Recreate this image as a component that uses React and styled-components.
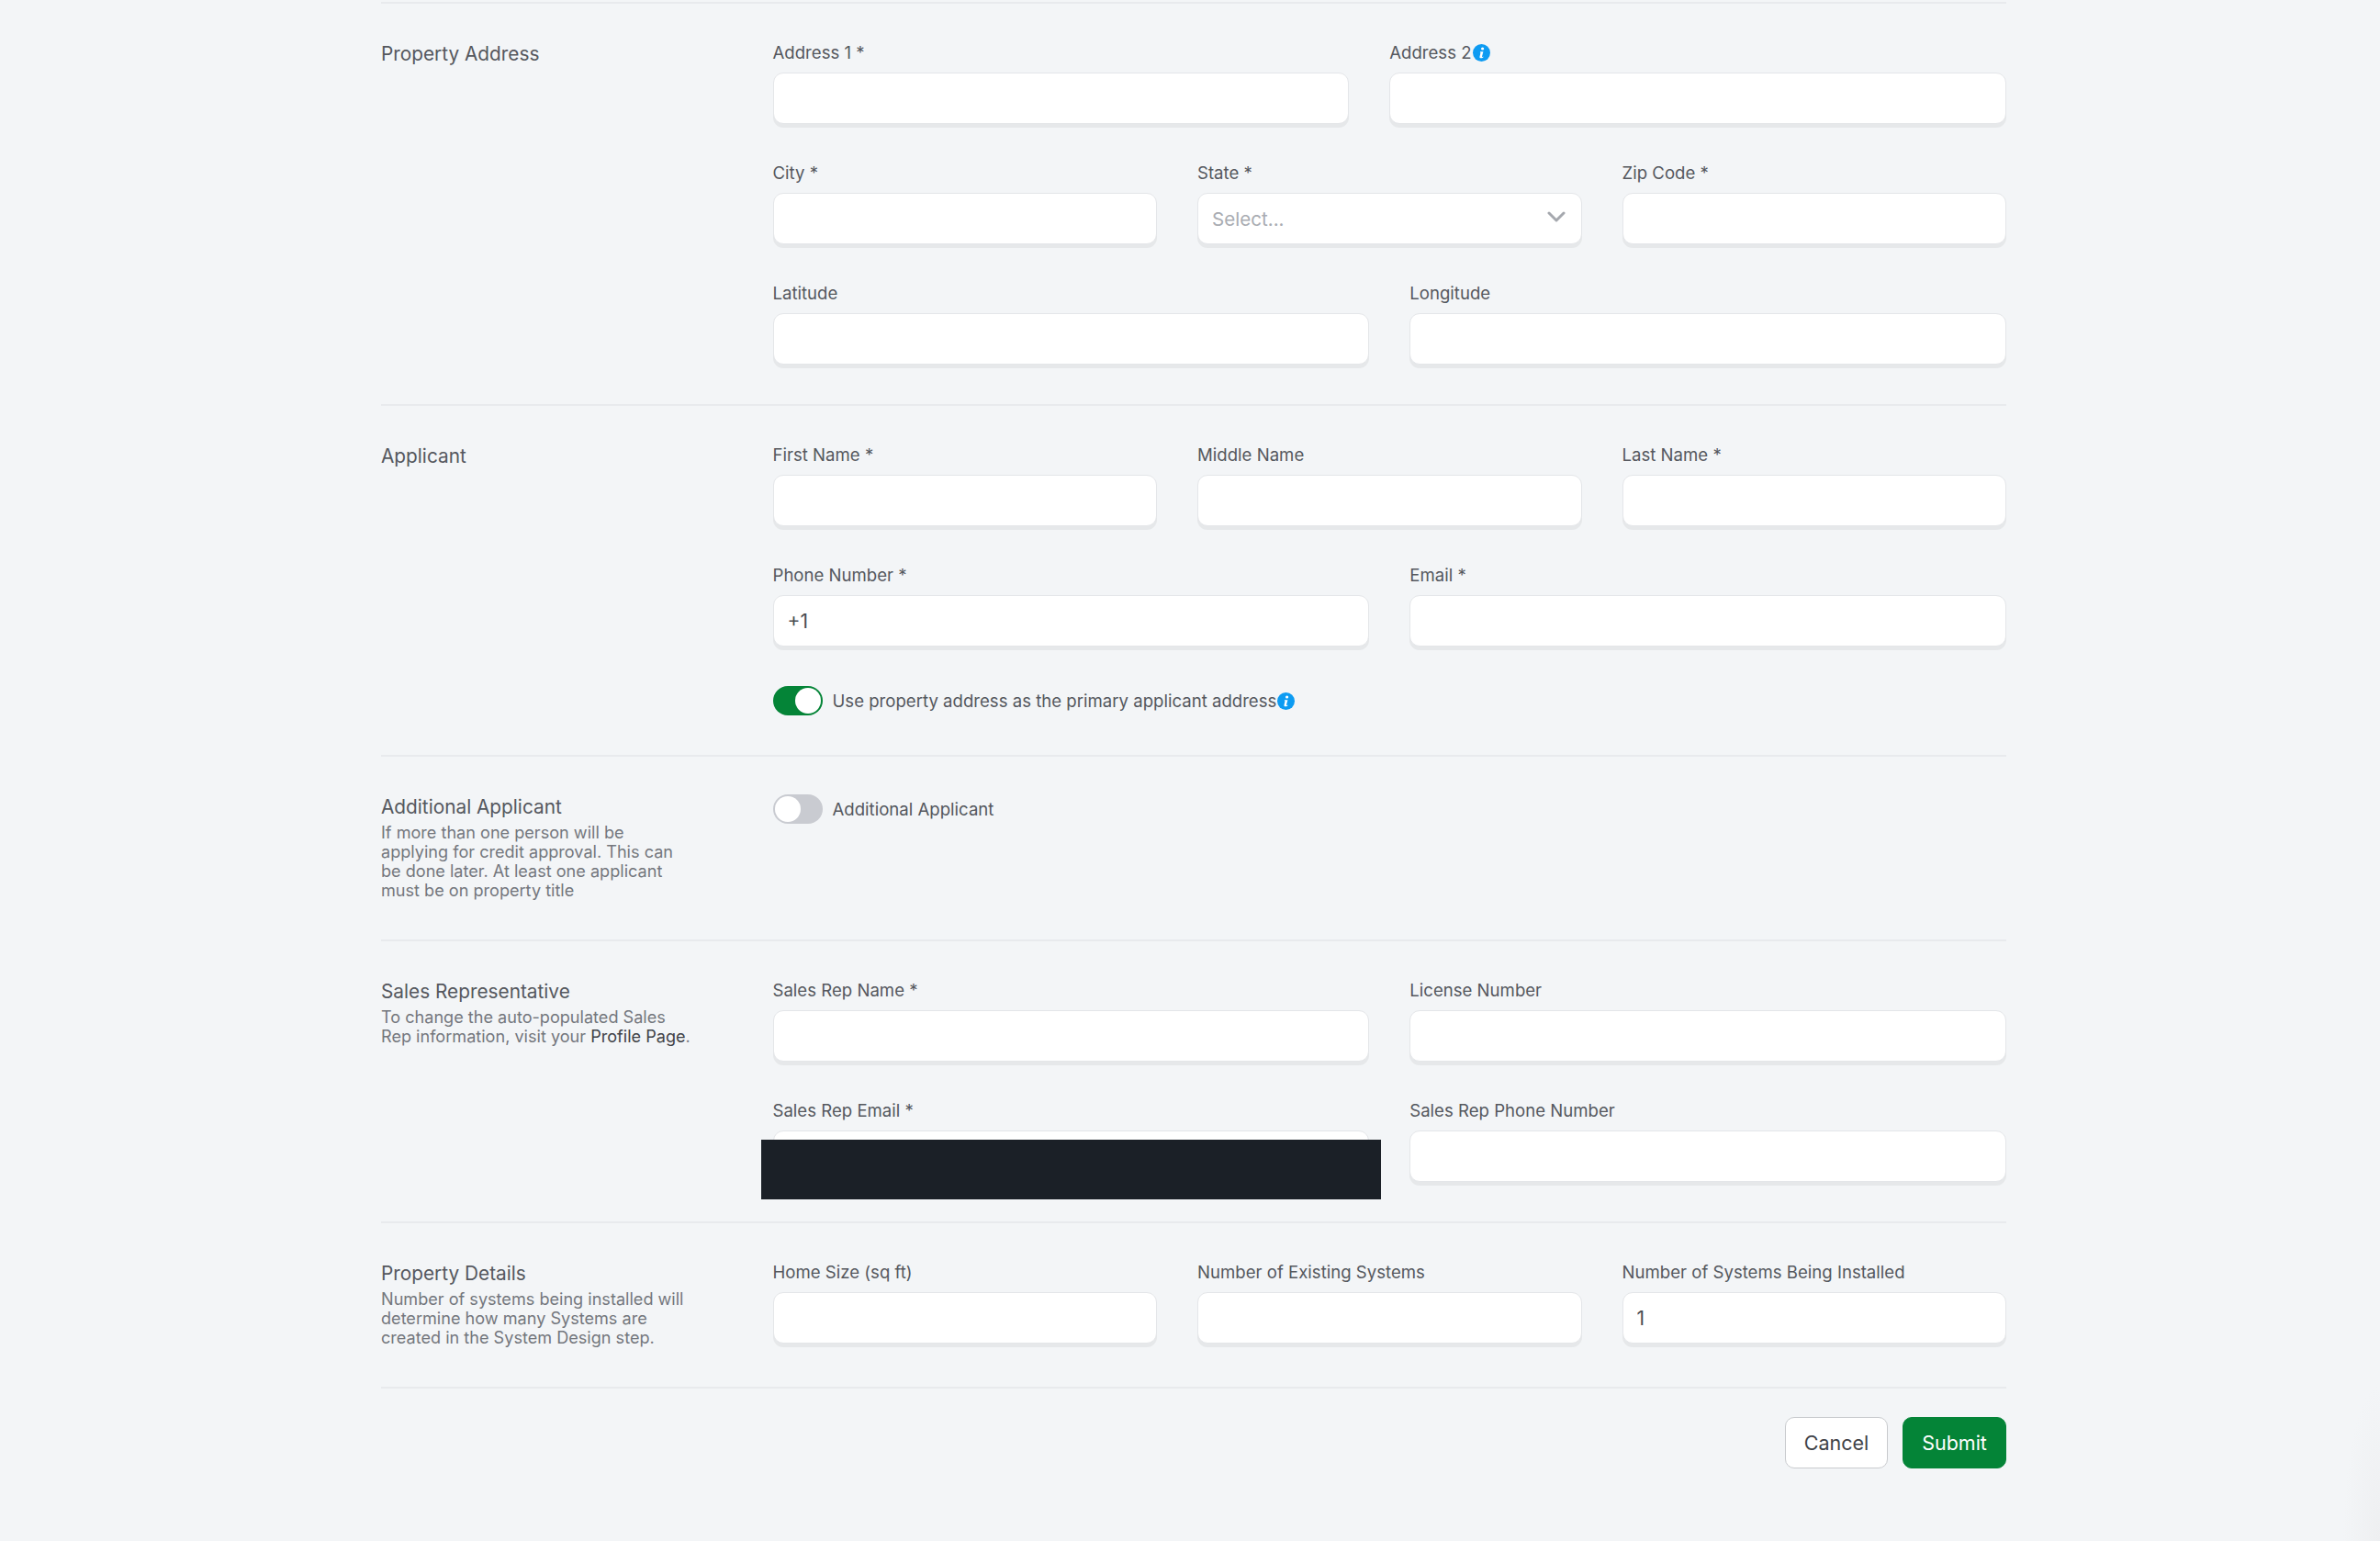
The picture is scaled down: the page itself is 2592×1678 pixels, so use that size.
import React from "react"
import styled, { createGlobalStyle } from "styled-components"

const GlobalStyle = createGlobalStyle`
  html, body {
    margin: 0;
    padding: 0;
    background: #f3f5f7;
  }
  body {
    background: radial-gradient(ellipse 40px 170px at 100% 100%, #eeeff1, transparent) no-repeat, #f3f5f7;
  }
  * {
    box-sizing: border-box;
  }
`

const Page = styled.div`
  width: 1770px;
  min-height: 1678px;
  margin-left: 415px;
  padding-top: 2px;
  font-family: Inter, "Noto Sans", sans-serif;
`

const Section = styled.section`
  display: grid;
  grid-template-columns: 426.5px 1fr;
  padding: 41px 0 43px;
  border-top: 2px solid #e8eaed;
`

const SectionInfo = styled.div`
  min-width: 0;
  margin-top: -1px;
`

const SectionTitle = styled.h3`
  margin: 0 0 2px;
  font-size: 20.8px;
  line-height: 30px;
  font-weight: 400;
  color: #55585e;
`

const SectionText = styled.p`
  margin: 0;
  max-width: 339px;
  font-size: 18.1px;
  line-height: 21px;
  color: #74777d;
`

const PlainLink = styled.a`
  color: #3f4247;
`

const Fields = styled.div`
  display: flex;
  flex-direction: column;
  gap: 41px;
  min-width: 0;
`

const Row = styled.div`
  display: grid;
  grid-template-columns: ${props => props.$cols};
  gap: 44px;
`

const Field = styled.div`
  position: relative;
  min-width: 0;
`

const Label = styled.label`
  display: flex;
  align-items: center;
  gap: 1px;
  height: 24px;
  margin-bottom: 10px;
  font-size: 18.6px;
  line-height: 22px;
  color: #55585e;
`

const Input = styled.input`
  display: block;
  width: 100%;
  height: 56px;
  padding: 0 15px;
  border: 1px solid #e4e6e9;
  border-radius: 11px;
  background: #fff;
  box-shadow: 0 4px 0 #e6e8ea;
  font-family: inherit;
  font-size: 21px;
  color: #4a4d52;
  outline: none;
`

const SelectBox = styled.div`
  display: flex;
  align-items: center;
  justify-content: space-between;
  height: 56px;
  padding: 0 15px;
  border: 1px solid #e4e6e9;
  border-radius: 11px;
  background: #fff;
  box-shadow: 0 4px 0 #e6e8ea;
  font-size: 20.6px;
  color: #a9acb2;
`

const Chevron = styled.svg`
  width: 20px;
  height: 12px;
  margin: -4px 2px 0 0;
  fill: none;
  stroke: #a5a8ae;
  stroke-width: 3;
  stroke-linecap: round;
  stroke-linejoin: round;
`

const InfoIcon = styled.svg`
  flex: none;
  width: 19px;
  height: 19px;
`

const Redaction = styled.div`
  position: absolute;
  top: 44px;
  left: -13px;
  right: -13px;
  height: 65px;
  background: #1b2027;
`

const ToggleRow = styled.div`
  display: flex;
  align-items: center;
  gap: 11px;
  height: 32px;
  margin-top: ${props => (props.$spaced ? "2px" : "0")};
  font-size: 18.6px;
  color: #55585e;
`

const ToggleText = styled.span`
  display: flex;
  align-items: center;
  gap: 1px;
`

const Toggle = styled.span`
  flex: none;
  display: flex;
  justify-content: ${props => (props.$on ? "flex-end" : "flex-start")};
  width: 54px;
  height: 32px;
  padding: 2px;
  border-radius: 16px;
  background: ${props => (props.$on ? "#048437" : "#c9cbd1")};

  &::after {
    content: "";
    width: 28px;
    height: 28px;
    border-radius: 50%;
    background: #fff;
  }
`

const Actions = styled.div`
  display: flex;
  justify-content: flex-end;
  gap: 16px;
  padding-top: 31px;
  border-top: 2px solid #e8eaed;
`

const Button = styled.button`
  height: 56px;
  padding: 0;
  width: ${props => (props.$primary ? "113px" : "112px")};
  border: 1px solid ${props => (props.$primary ? "#048437" : "#c9cbce")};
  border-radius: 10px;
  background: ${props => (props.$primary ? "#048437" : "#fff")};
  color: ${props => (props.$primary ? "#fff" : "#3f4247")};
  font-family: inherit;
  font-size: 21.5px;
  font-weight: 400;
`

const Info = () => (
  <InfoIcon viewBox="0 0 19 19">
    <circle cx="9.5" cy="9.5" r="9.5" fill="#0d9bf2" />
    <circle cx="10.6" cy="5" r="1.6" fill="#fff" />
    <path d="M8 8.2h3.4L10 13.6c-.1.4.2.5.5.4l1-.5-.2.9c-.9.7-1.7.9-2.5.9-1 0-1.5-.7-1.3-1.6l1-4.4-.6-.1z" fill="#fff" />
  </InfoIcon>
)

const FieldBox = ({ label, info, value, redacted }) => (
  <Field>
    <Label>
      {label}
      {info && <Info />}
    </Label>
    <Input defaultValue={value} />
    {redacted && <Redaction />}
  </Field>
)

const TWO = "1fr 1fr"
const THREE = "1fr 1fr 1fr"

const App = () => (
  <Page>
    <GlobalStyle />

    <Section>
      <SectionInfo>
        <SectionTitle>Property Address</SectionTitle>
      </SectionInfo>
      <Fields>
        <Row $cols="627fr 671fr">
          <FieldBox label="Address 1 *" />
          <FieldBox label="Address 2" info />
        </Row>
        <Row $cols={THREE}>
          <FieldBox label="City *" />
          <Field>
            <Label>State *</Label>
            <SelectBox>
              Select...
              <Chevron viewBox="0 0 20 12">
                <path d="M2 2l8 8 8-8" />
              </Chevron>
            </SelectBox>
          </Field>
          <FieldBox label="Zip Code *" />
        </Row>
        <Row $cols={TWO}>
          <FieldBox label="Latitude" />
          <FieldBox label="Longitude" />
        </Row>
      </Fields>
    </Section>

    <Section>
      <SectionInfo>
        <SectionTitle>Applicant</SectionTitle>
      </SectionInfo>
      <Fields>
        <Row $cols={THREE}>
          <FieldBox label="First Name *" />
          <FieldBox label="Middle Name" />
          <FieldBox label="Last Name *" />
        </Row>
        <Row $cols={TWO}>
          <FieldBox label="Phone Number *" value="+1" />
          <FieldBox label="Email *" />
        </Row>
        <ToggleRow $spaced>
          <Toggle $on />
          <ToggleText>
            Use property address as the primary applicant address
            <Info />
          </ToggleText>
        </ToggleRow>
      </Fields>
    </Section>

    <Section>
      <SectionInfo>
        <SectionTitle>Additional Applicant</SectionTitle>
        <SectionText>
          If more than one person will be applying for credit approval. This can be done later. At
          least one applicant must be on property title
        </SectionText>
      </SectionInfo>
      <Fields>
        <ToggleRow>
          <Toggle />
          <ToggleText>Additional Applicant</ToggleText>
        </ToggleRow>
      </Fields>
    </Section>

    <Section>
      <SectionInfo>
        <SectionTitle>Sales Representative</SectionTitle>
        <SectionText>
          To change the auto-populated Sales Rep information, visit your{" "}
          <PlainLink>Profile Page</PlainLink>.
        </SectionText>
      </SectionInfo>
      <Fields>
        <Row $cols={TWO}>
          <FieldBox label="Sales Rep Name *" />
          <FieldBox label="License Number" />
        </Row>
        <Row $cols={TWO}>
          <FieldBox label="Sales Rep Email *" redacted />
          <FieldBox label="Sales Rep Phone Number" />
        </Row>
      </Fields>
    </Section>

    <Section>
      <SectionInfo>
        <SectionTitle>Property Details</SectionTitle>
        <SectionText>
          Number of systems being installed will determine how many Systems are created in the
          System Design step.
        </SectionText>
      </SectionInfo>
      <Fields>
        <Row $cols={THREE}>
          <FieldBox label="Home Size (sq ft)" />
          <FieldBox label="Number of Existing Systems" />
          <FieldBox label="Number of Systems Being Installed" value="1" />
        </Row>
      </Fields>
    </Section>

    <Actions>
      <Button>Cancel</Button>
      <Button $primary>Submit</Button>
    </Actions>
  </Page>
)

export default App
